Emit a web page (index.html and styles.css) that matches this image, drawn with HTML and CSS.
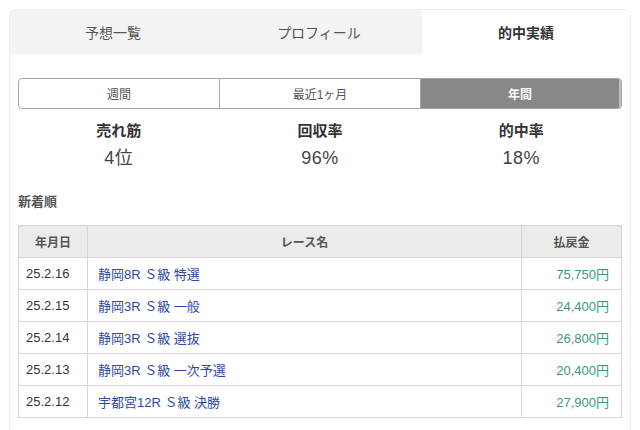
FILE: index.html
```html
<!DOCTYPE html>
<html lang="ja">
<head>
<meta charset="utf-8">
<link rel="stylesheet" href="styles.css">
</head>
<body>
<div class="card">
  <div class="tabs">
    <div class="tab">予想一覧</div>
    <div class="tab">プロフィール</div>
    <div class="tab active">的中実績</div>
  </div>
  <div class="content">
    <div class="seg">
      <div class="seg-item">週間</div>
      <div class="seg-item">最近1ヶ月</div>
      <div class="seg-item on">年間</div>
    </div>
    <div class="stats">
      <div class="stat"><div class="label">売れ筋</div><div class="value">4位</div></div>
      <div class="stat"><div class="label">回収率</div><div class="value">96%</div></div>
      <div class="stat"><div class="label">的中率</div><div class="value">18%</div></div>
    </div>
    <div class="heading">新着順</div>
    <table class="results">
      <thead>
        <tr><th class="c-date">年月日</th><th>レース名</th><th class="c-pay">払戻金</th></tr>
      </thead>
      <tbody>
        <tr><td class="date">25.2.16</td><td class="race">静岡8R Ｓ級 特選</td><td class="pay">75,750円</td></tr>
        <tr><td class="date">25.2.15</td><td class="race">静岡3R Ｓ級 一般</td><td class="pay">24,400円</td></tr>
        <tr><td class="date">25.2.14</td><td class="race">静岡3R Ｓ級 選抜</td><td class="pay">26,800円</td></tr>
        <tr><td class="date">25.2.13</td><td class="race">静岡3R Ｓ級 一次予選</td><td class="pay">20,400円</td></tr>
        <tr><td class="date">25.2.12</td><td class="race">宇都宮12R Ｓ級 決勝</td><td class="pay">27,900円</td></tr>
      </tbody>
    </table>
  </div>
</div>
</body>
</html>
```
FILE: styles.css
```css
html, body {
  margin: 0;
  padding: 0;
  background: #ffffff;
}
body {
  font-family: "Liberation Sans", "Noto Sans CJK JP", sans-serif;
  color: #333;
}
.card {
  margin: 9px 9px 0 9px;
  border: 1px solid #eeeeee;
  border-radius: 6px;
  overflow: hidden;
  height: 440px;
  box-sizing: border-box;
}
.tabs {
  display: grid;
  grid-template-columns: 206px 206px 1fr;
  height: 44px;
}
.tab {
  background: #f3f3f3;
  display: flex;
  align-items: center;
  justify-content: center;
  font-size: 14px;
  color: #555;
}
.tab.active {
  background: #fff;
  font-weight: bold;
  color: #333;
}
.content {
  padding: 24px 8px 0 8px;
}
.seg {
  display: grid;
  grid-template-columns: 200px 201px 1fr;
  height: 31px;
  border: 1px solid #a8a8a8;
  border-radius: 4px;
  overflow: hidden;
  box-sizing: border-box;
}
.seg-item {
  display: flex;
  align-items: center;
  justify-content: center;
  font-size: 12px;
  color: #555;
  border-left: 1px solid #a8a8a8;
}
.seg-item:first-child {
  border-left: none;
}
.seg-item.on {
  background: #888888;
  color: #fff;
  font-weight: bold;
  border-right: 2px solid #bdbdbd;
}
.stats {
  display: grid;
  grid-template-columns: 1fr 1fr 1fr;
  padding-top: 11px;
  text-align: center;
}
.label {
  font-size: 15px;
  font-weight: bold;
  line-height: 22px;
  color: #333;
}
.value {
  font-size: 18px;
  line-height: 26px;
  margin-top: 3px;
  color: #444;
  letter-spacing: 0.5px;
}
.heading {
  margin-top: 21px;
  font-size: 13px;
  font-weight: bold;
  color: #555;
  line-height: 20px;
}
.results {
  margin-top: 13px;
  width: 100%;
  border-collapse: collapse;
  font-size: 13px;
}
.results th, .results td {
  border: 1px solid #d6d6d6;
  height: 31px;
  padding: 0;
}
.results th {
  background: #ebebeb;
  font-size: 12px;
  font-weight: bold;
  color: #555;
  text-align: center;
}
.c-date { width: 68px; }
.c-pay { width: 99px; }
.date {
  padding-left: 7px !important;
  color: #333;
}
.race {
  padding-left: 10px !important;
  color: #2b48a8;
}
.pay {
  text-align: right;
  padding-right: 12px !important;
  color: #3a9a7a;
}
```
